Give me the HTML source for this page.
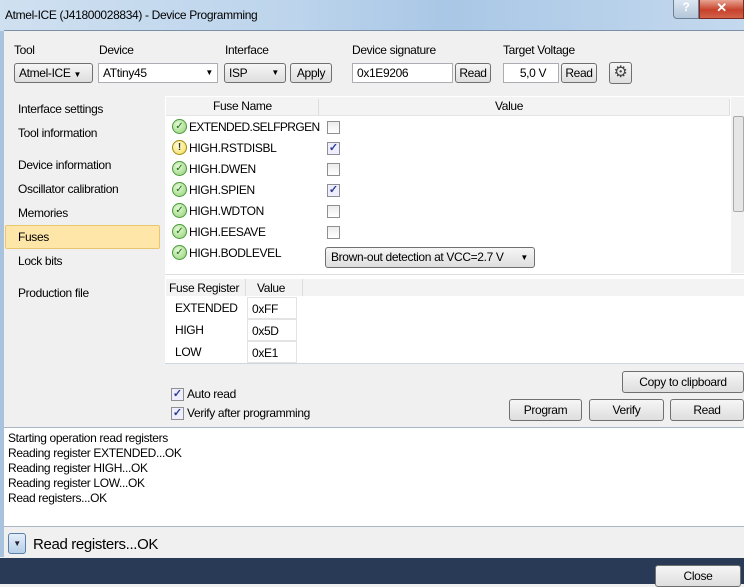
<!DOCTYPE html>
<html><head><style>
*{box-sizing:border-box;margin:0;padding:0}
body{width:744px;height:584px;overflow:hidden;position:relative;font-family:"Liberation Sans",sans-serif;font-size:12px;letter-spacing:-0.35px;color:#000;background:#f0f0f0}
.a{position:absolute}
.t{position:absolute;white-space:nowrap}
.btn{position:absolute;border:1px solid #707070;border-radius:3px;background:linear-gradient(#f6f6f6,#dedede);text-align:center;font-size:12px}
.inp{position:absolute;border:1px solid #abadb3;background:#fff;font-size:12px;padding-left:4px}
.cb{position:absolute;width:13px;height:13px;border:1px solid #8e8f8f;background:linear-gradient(#ececec,#fff)}
.ck{position:absolute;width:13px;height:13px;border:1px solid #8e8f8f;background:#eef;color:#2b3d8f;font-size:11px;line-height:11px;text-align:center;font-weight:bold;letter-spacing:0}
.ok{position:absolute;width:15px;height:15px;border-radius:50%;border:1px solid #4a9a3a;background:radial-gradient(circle at 40% 35%,#e6f8d8,#8fd274);color:#1f6b14;font-size:10px;line-height:13px;text-align:center;letter-spacing:0}
</style></head><body>
<div class="a" style="left:0;top:0;width:744px;height:31px;background:linear-gradient(90deg,#cfe0f0,#bcd4ec 40%,#a9c7e6 60%,#c4d9ee)"></div>
<div class="t" style="left:5px;top:8px;font-size:12px">Atmel-ICE (J41800028834) - Device Programming</div>
<div class="a" style="left:673px;top:0;width:26px;height:19px;border:1px solid #6d7f96;border-top:none;border-radius:0 0 0 4px;background:linear-gradient(#dbe6f2,#b4c6da);color:#fff;text-align:center;font-weight:bold;font-size:12px">?</div>
<div class="a" style="left:699px;top:0;width:45px;height:19px;border:1px solid #7a2a20;border-top:none;background:linear-gradient(#e8a492,#c7422b 55%,#d2624a);color:#fff;text-align:center;font-weight:bold;font-size:13px">✕</div>
<div class="a" style="left:0;top:31px;width:4px;height:526px;background:#a9c3de"></div>
<div class="a" style="left:4px;top:30px;width:740px;height:1px;background:#7b8fa6"></div>
<div class="t" style="left:14px;top:43px">Tool</div>
<div class="t" style="left:99px;top:43px">Device</div>
<div class="t" style="left:225px;top:43px">Interface</div>
<div class="t" style="left:352px;top:43px">Device signature</div>
<div class="t" style="left:503px;top:43px">Target Voltage</div>
<div class="btn" style="left:14px;top:63px;width:79px;height:20px;line-height:18px;text-align:left;padding-left:4px">Atmel-ICE <span style="font-size:8px">▼</span></div>
<div class="inp" style="left:98px;top:63px;width:120px;height:20px;line-height:18px">ATtiny45<span style="position:absolute;right:4px;font-size:8px">▼</span></div>
<div class="btn" style="left:224px;top:63px;width:62px;height:20px;line-height:18px;text-align:left;padding-left:4px">ISP<span style="position:absolute;right:6px;font-size:8px">▼</span></div>
<div class="btn" style="left:290px;top:63px;width:42px;height:20px;line-height:18px">Apply</div>
<div class="inp" style="left:352px;top:63px;width:101px;height:20px;line-height:18px">0x1E9206</div>
<div class="btn" style="left:455px;top:63px;width:36px;height:20px;line-height:18px">Read</div>
<div class="inp" style="left:503px;top:63px;width:56px;height:20px;line-height:18px;text-align:center">5,0 V</div>
<div class="btn" style="left:561px;top:63px;width:36px;height:20px;line-height:18px">Read</div>
<div class="btn" style="left:609px;top:62px;width:23px;height:22px;line-height:19px;font-size:16px;color:#444">⚙</div>
<div class="a" style="left:5px;top:96px;width:157px;height:330px;background:#f0f0f0"></div>
<div class="t" style="left:18px;top:102px">Interface settings</div>
<div class="t" style="left:18px;top:126px">Tool information</div>
<div class="t" style="left:18px;top:158px">Device information</div>
<div class="t" style="left:18px;top:182px">Oscillator calibration</div>
<div class="t" style="left:18px;top:206px">Memories</div>
<div class="a" style="left:5px;top:225px;width:155px;height:24px;background:#fde6a8;border:1px solid #e8c56f;border-radius:2px"></div>
<div class="t" style="left:18px;top:230px">Fuses</div>
<div class="t" style="left:18px;top:254px">Lock bits</div>
<div class="t" style="left:18px;top:286px">Production file</div>
<div class="a" style="left:165px;top:96px;width:579px;height:330px;background:#fff"></div>
<div class="a" style="left:166px;top:97px;width:564px;height:19px;background:#f3f3f3;border-bottom:1px solid #e5e5e5"></div>
<div class="a" style="left:318px;top:99px;width:1px;height:16px;background:#ddd"></div>
<div class="a" style="left:729px;top:99px;width:1px;height:16px;background:#ddd"></div>
<div class="t" style="left:213px;top:99px">Fuse Name</div>
<div class="t" style="left:495px;top:99px">Value</div>
<div class="a" style="left:731px;top:97px;width:13px;height:176px;background:#f2f2f2"></div>
<div class="a" style="left:733px;top:116px;width:11px;height:96px;background:#e6e6e6;border:1px solid #aaa;border-radius:2px"></div>
<div class="ok" style="left:172px;top:119px">✓</div><div class="t" style="left:189px;top:120px;letter-spacing:-0.6px">EXTENDED.SELFPRGEN</div><div class="cb" style="left:327px;top:121px"></div>
<div class="ok" style="left:172px;top:140px;border-color:#a08a10;background:radial-gradient(circle at 40% 35%,#fffbe0,#f2dc4a);color:#333;font-weight:bold">!</div><div class="t" style="left:189px;top:141px">HIGH.RSTDISBL</div><div class="ck" style="left:327px;top:142px">✓</div>
<div class="ok" style="left:172px;top:161px">✓</div><div class="t" style="left:189px;top:162px">HIGH.DWEN</div><div class="cb" style="left:327px;top:163px"></div>
<div class="ok" style="left:172px;top:182px">✓</div><div class="t" style="left:189px;top:183px">HIGH.SPIEN</div><div class="ck" style="left:327px;top:184px">✓</div>
<div class="ok" style="left:172px;top:203px">✓</div><div class="t" style="left:189px;top:204px">HIGH.WDTON</div><div class="cb" style="left:327px;top:205px"></div>
<div class="ok" style="left:172px;top:224px">✓</div><div class="t" style="left:189px;top:225px">HIGH.EESAVE</div><div class="cb" style="left:327px;top:226px"></div>
<div class="ok" style="left:172px;top:245px">✓</div><div class="t" style="left:189px;top:246px">HIGH.BODLEVEL</div>
<div class="btn" style="left:325px;top:247px;width:210px;height:21px;line-height:19px;text-align:left;padding-left:5px">Brown-out detection at VCC=2.7 V<span style="position:absolute;right:6px;font-size:8px">▼</span></div>
<div class="a" style="left:165px;top:274px;width:579px;height:1px;background:#ddd"></div>
<div class="a" style="left:166px;top:279px;width:578px;height:17px;background:#f3f3f3"></div>
<div class="t" style="left:169px;top:281px">Fuse Register</div>
<div class="a" style="left:245px;top:279px;width:1px;height:17px;background:#ddd"></div>
<div class="t" style="left:257px;top:281px">Value</div>
<div class="a" style="left:302px;top:279px;width:1px;height:17px;background:#ddd"></div>
<div class="t" style="left:175px;top:301px">EXTENDED</div><div class="inp" style="left:247px;top:297px;width:50px;height:22px;line-height:22px;border-color:#e3e3e3">0xFF</div>
<div class="t" style="left:175px;top:323px">HIGH</div><div class="inp" style="left:247px;top:319px;width:50px;height:22px;line-height:22px;border-color:#e3e3e3">0x5D</div>
<div class="t" style="left:175px;top:345px">LOW</div><div class="inp" style="left:247px;top:341px;width:50px;height:22px;line-height:22px;border-color:#e3e3e3">0xE1</div>
<div class="a" style="left:165px;top:363px;width:579px;height:1px;background:#cfd6df"></div>
<div class="a" style="left:165px;top:364px;width:579px;height:62px;background:#f0f0f0"></div>
<div class="ck" style="left:171px;top:388px">✓</div><div class="t" style="left:187px;top:387px">Auto read</div>
<div class="ck" style="left:171px;top:407px">✓</div><div class="t" style="left:187px;top:406px">Verify after programming</div>
<div class="btn" style="left:622px;top:371px;width:122px;height:22px;line-height:20px">Copy to clipboard</div>
<div class="btn" style="left:509px;top:399px;width:73px;height:22px;line-height:20px">Program</div>
<div class="btn" style="left:589px;top:399px;width:75px;height:22px;line-height:20px">Verify</div>
<div class="btn" style="left:670px;top:399px;width:74px;height:22px;line-height:20px">Read</div>
<div class="a" style="left:4px;top:427px;width:740px;height:100px;background:#fff;border-top:1px solid #a9b6c6;border-bottom:1px solid #a9b6c6"></div>
<div class="t" style="left:8px;top:431px;line-height:15px">Starting operation read registers<br>Reading register EXTENDED...OK<br>Reading register HIGH...OK<br>Reading register LOW...OK<br>Read registers...OK</div>
<div class="a" style="left:8px;top:533px;width:18px;height:21px;border:1px solid #5a7fa8;border-radius:3px;background:linear-gradient(#e4eef9,#b7cfe8);font-size:8px;text-align:center;line-height:19px;color:#223">▼</div>
<div class="t" style="left:33px;top:536px;font-size:15px">Read registers...OK</div>
<div class="a" style="left:0;top:558px;width:744px;height:26px;background:#283a55"></div>
<div class="btn" style="left:655px;top:565px;width:86px;height:22px;line-height:20px">Close</div>
</body></html>
